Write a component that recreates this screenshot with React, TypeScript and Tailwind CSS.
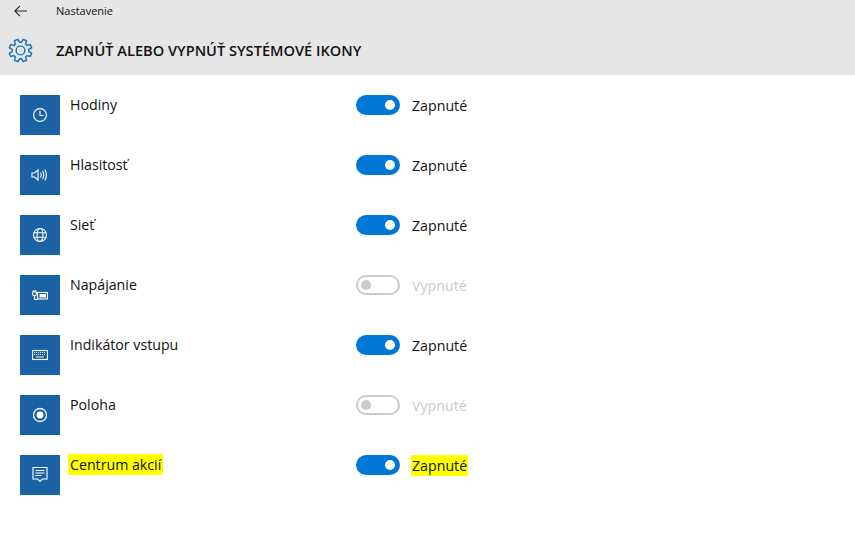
import React from "react";

const stroke = { fill: "none", stroke: "white", strokeWidth: 1.1 };

const Clock = () => (
  <svg width="16" height="16" viewBox="0 0 16 16" {...stroke}>
    <circle cx="8" cy="8" r="6.4" />
    <path d="M8 3.8V8.5H11.5" />
  </svg>
);
const Speaker = () => (
  <svg width="18" height="16" viewBox="0 0 18 16" {...stroke}>
    <path d="M1 6H3.5L7 3V13L3.5 10H1Z" />
    <path d="M9.5 5.5C10.5 7 10.5 9 9.5 10.5" />
    <path d="M11.5 4C13 6.3 13 9.7 11.5 12" />
    <path d="M13.8 2.5C15.8 5.5 15.8 10.5 13.8 13.5" />
  </svg>
);
const Globe = () => (
  <svg width="16" height="16" viewBox="0 0 16 16" {...stroke}>
    <circle cx="8" cy="8" r="6.5" />
    <ellipse cx="8" cy="8" rx="3" ry="6.5" />
    <path d="M1.8 5.7H14.2M1.8 10.3H14.2" />
  </svg>
);
const Power = () => (
  <svg width="16" height="12" viewBox="0 0 16 12" {...stroke}>
    <rect x="5.5" y="3.5" width="10" height="6.5" />
    <rect x="7.5" y="5" width="6.5" height="3.5" fill="white" stroke="none" />
    <path d="M0.5 3H4.5V5C4.5 6 3.5 6.7 2.5 6.7C1.5 6.7 0.5 6 0.5 5ZM1.7 1V3M3.3 1V3M2.5 6.7V10.5H5.5M4.5 4.5H5.5" />
  </svg>
);
const Keyboard = () => (
  <svg width="16" height="12" viewBox="0 0 16 12" {...stroke}>
    <rect x="0.5" y="1.5" width="15" height="9" />
    <path d="M2 3.5H14M2 5.5H14" strokeDasharray="1 1" strokeWidth="0.9" />
    <path d="M4 8H12" strokeWidth="0.9" />
  </svg>
);
const Location = () => (
  <svg width="16" height="16" viewBox="0 0 16 16">
    <circle cx="8" cy="8" r="6.5" fill="none" stroke="white" strokeWidth="1.3" />
    <circle cx="8" cy="8" r="3.4" fill="white" />
  </svg>
);
const Action = () => (
  <svg width="16" height="18" viewBox="0 0 16 18" {...stroke}>
    <path d="M1 1.5H15V13H10.5L8 15.5L5.5 13H1Z" />
    <path d="M3.5 4.5H12.5M3.5 7H12.5M3.5 9.5H9.5" />
  </svg>
);

const gearPath = (() => {
  const pts: string[] = [];
  for (let i = 0; i < 8; i++) {
    const a = (i * Math.PI) / 4 + Math.PI / 8;
    const p = (r: number, d: number) =>
      `${(12 + r * Math.cos(a + d)).toFixed(2)} ${(12 + r * Math.sin(a + d)).toFixed(2)}`;
    pts.push(`${i === 0 ? "M" : "L"}${p(8, -0.27)}`, `L${p(11, -0.16)}`, `L${p(11, 0.16)}`, `L${p(8, 0.27)}`);
  }
  return pts.join("") + "Z";
})();

function Toggle({ on }: { on: boolean }) {
  return on ? (
    <div className="flex h-5 w-11 items-center justify-end rounded-full bg-[#0078d7] pr-[5px]">
      <div className="h-[10px] w-[10px] rounded-full bg-white" />
    </div>
  ) : (
    <div className="flex h-5 w-11 items-center rounded-full border-2 border-[#cccccc] bg-white pl-[3px]">
      <div className="h-[10px] w-[10px] rounded-full bg-[#cccccc]" />
    </div>
  );
}

const rows: { name: string; icon: React.ReactNode; on: boolean; mark?: boolean }[] = [
  { name: "Hodiny", icon: <Clock />, on: true },
  { name: "Hlasitosť", icon: <Speaker />, on: true },
  { name: "Sieť", icon: <Globe />, on: true },
  { name: "Napájanie", icon: <Power />, on: false },
  { name: "Indikátor vstupu", icon: <Keyboard />, on: true },
  { name: "Poloha", icon: <Location />, on: false },
  { name: "Centrum akcií", icon: <Action />, on: true, mark: true },
];

export default function App() {
  return (
    <div className="h-[554px] w-[855px] overflow-hidden bg-white font-['Open_Sans','Noto_Sans',sans-serif] text-[#111111]">
      <header className="h-[75px] bg-[#e6e6e6]">
        <div className="flex h-[22px] items-center">
          <svg className="ml-[14px]" width="13" height="12" viewBox="0 0 13 12" fill="none" stroke="#222222" strokeWidth="1.1">
            <path d="M13 6H0.8M6 0.8L0.8 6L6 11.2" />
          </svg>
          <span className="ml-[29px] text-[11px]">Nastavenie</span>
        </div>
        <div className="mt-4 flex items-center">
          <svg className="ml-[8px]" width="25" height="25" viewBox="0 0 24 24" fill="none" stroke="#1a73bd" strokeWidth="1.4" strokeLinejoin="round">
            <path d={gearPath} />
            <circle cx="12" cy="12" r="4.2" />
          </svg>
          <h1 className="ml-[23px] text-[14.6px] font-semibold leading-[25px]">ZAPNÚŤ ALEBO VYPNÚŤ SYSTÉMOVÉ IKONY</h1>
        </div>
      </header>
      <main className="pt-5 pl-5">
        {rows.map((r) => (
          <div key={r.name} className="flex h-[60px] items-start">
            <div className="flex h-10 w-10 items-center justify-center bg-[#1b62a5]">{r.icon}</div>
            <div className="w-[296px] pl-[10px] text-[14.2px] leading-[20px]">
              <span className={r.mark ? "-ml-[2px] bg-[#ffff00] px-[2px] py-[1px]" : ""}>{r.name}</span>
            </div>
            <Toggle on={r.on} />
            <div className={`ml-3 pt-px text-[14.2px] leading-[20px] ${r.on ? "" : "text-[#cccccc]"}`}>
              <span className={r.mark ? "-ml-[1px] bg-[#ffff00] px-[1px] py-[1px]" : ""}>{r.on ? "Zapnuté" : "Vypnuté"}</span>
            </div>
          </div>
        ))}
      </main>
    </div>
  );
}
